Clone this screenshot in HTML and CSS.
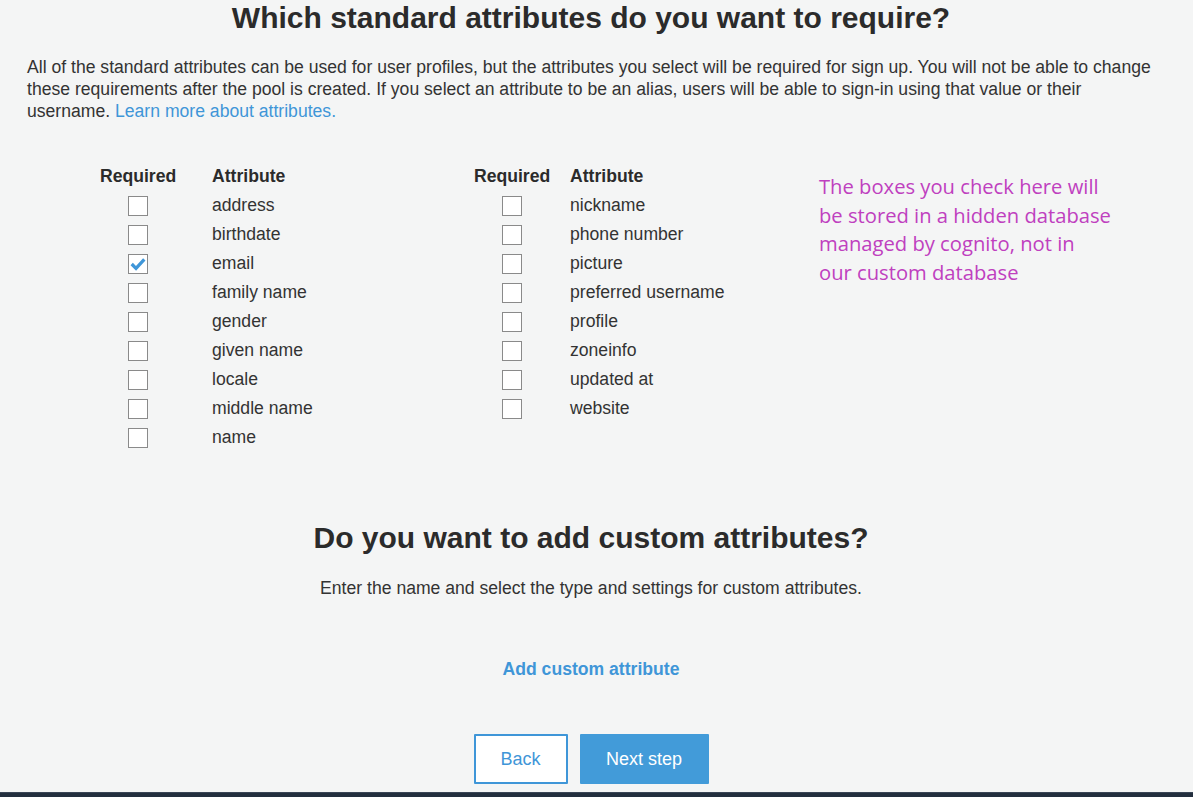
FILE: index.html
```html
<!DOCTYPE html>
<html>
<head>
<meta charset="utf-8">
<link rel="stylesheet" href="styles.css">
</head>
<body>
<div class="page">
  <h1 class="title">Which standard attributes do you want to require?</h1>
  <p class="intro">All of the standard attributes can be used for user profiles, but the attributes you select will be required for sign up. You will not be able to change these requirements after the pool is created. If you select an attribute to be an alias, users will be able to sign-in using that value or their username. <a class="link" href="#">Learn more about attributes.</a></p>

  <div class="attrs">
    <div class="table t1">
      <div class="row head"><span class="req">Required</span><span class="name">Attribute</span></div>
      <div class="row"><span class="req"><span class="box"></span></span><span class="name">address</span></div>
      <div class="row"><span class="req"><span class="box"></span></span><span class="name">birthdate</span></div>
      <div class="row"><span class="req"><span class="box checked"><svg viewBox="0 0 20 20" width="18" height="18"><path d="M3 10 L7.8 14.8 L17 4.8" fill="none" stroke="#3f96d8" stroke-width="3.6" stroke-linejoin="miter" stroke-linecap="butt"/></svg></span></span><span class="name">email</span></div>
      <div class="row"><span class="req"><span class="box"></span></span><span class="name">family name</span></div>
      <div class="row"><span class="req"><span class="box"></span></span><span class="name">gender</span></div>
      <div class="row"><span class="req"><span class="box"></span></span><span class="name">given name</span></div>
      <div class="row"><span class="req"><span class="box"></span></span><span class="name">locale</span></div>
      <div class="row"><span class="req"><span class="box"></span></span><span class="name">middle name</span></div>
      <div class="row"><span class="req"><span class="box"></span></span><span class="name">name</span></div>
    </div>
    <div class="table t2">
      <div class="row head"><span class="req">Required</span><span class="name">Attribute</span></div>
      <div class="row"><span class="req"><span class="box"></span></span><span class="name">nickname</span></div>
      <div class="row"><span class="req"><span class="box"></span></span><span class="name">phone number</span></div>
      <div class="row"><span class="req"><span class="box"></span></span><span class="name">picture</span></div>
      <div class="row"><span class="req"><span class="box"></span></span><span class="name">preferred username</span></div>
      <div class="row"><span class="req"><span class="box"></span></span><span class="name">profile</span></div>
      <div class="row"><span class="req"><span class="box"></span></span><span class="name">zoneinfo</span></div>
      <div class="row"><span class="req"><span class="box"></span></span><span class="name">updated at</span></div>
      <div class="row"><span class="req"><span class="box"></span></span><span class="name">website</span></div>
    </div>
    <div class="note">The boxes you check here will<br>be stored in a hidden database<br>managed by cognito, not in<br>our custom database</div>
  </div>

  <h2 class="title second">Do you want to add custom attributes?</h2>
  <p class="sub">Enter the name and select the type and settings for custom attributes.</p>
  <div class="add"><a class="link bold" href="#">Add custom attribute</a></div>
  <div class="buttons">
    <button class="btn back">Back</button>
    <button class="btn next">Next step</button>
  </div>
</div>
<div class="footer"></div>
</body>
</html>
```

FILE: styles.css
```css
html, body {
  margin: 0;
  padding: 0;
  background: #f4f5f5;
  height: 797px;
  overflow: hidden;
}
body {
  font-family: "Liberation Sans", Arial, sans-serif;
  color: #333333;
}
.page {
  padding: 0 38px 0 27px;
}
.title {
  margin: 0;
  font-size: 30px;
  line-height: 36px;
  font-weight: bold;
  text-align: center;
  color: #2b2b2b;
}
.intro {
  margin: 20px -14px 0 0;
  font-size: 17.6px;
  line-height: 22px;
}
.link {
  color: #3f96d8;
  text-decoration: none;
}
.bold { font-weight: bold; }
.attrs {
  display: flex;
  margin: 39px 0 0 73px;
}
.table { display: flex; flex-direction: column; }
.t1 { width: 374px; }
.t2 { width: 345px; }
.row {
  display: flex;
  align-items: center;
  height: 29px;
  font-size: 17.6px;
}
.head {
  font-weight: bold;
  color: #2b2b2b;
  height: 30px;
}
.req {
  display: flex;
  justify-content: center;
  width: 76px;
}
.t1 .req { margin-right: 36px; }
.t2 .req { margin-right: 20px; }
.head .req { justify-content: flex-start; }
.box {
  box-sizing: border-box;
  width: 20px;
  height: 20px;
  border: 1px solid #8a8a8a;
  background: #ffffff;
  display: flex;
  align-items: center;
  justify-content: center;
}
.note {
  font-family: "Open Sans", sans-serif;
  font-size: 20.2px;
  line-height: 28.7px;
  color: #bf40bf;
  white-space: nowrap;
  margin-top: 11px;
}
.second { margin-top: 68px; }
.sub {
  margin: 21px 0 0 0;
  text-align: center;
  font-size: 17.6px;
  line-height: 22px;
}
.add {
  margin-top: 59px;
  text-align: center;
  font-size: 17.6px;
  line-height: 22px;
}
.buttons {
  display: flex;
  justify-content: center;
  gap: 12px;
  margin-top: 54px;
}
.btn {
  box-sizing: border-box;
  height: 50px;
  font-family: "Liberation Sans", Arial, sans-serif;
  font-size: 18px;
  border-radius: 1px;
  cursor: pointer;
}
.back {
  width: 94px;
  background: #ffffff;
  border: 2px solid #3f96d8;
  color: #3f96d8;
}
.next {
  width: 129px;
  background: #429bd9;
  border: 0;
  color: #ffffff;
}
.footer {
  margin-top: 8px;
  height: 20px;
  background: #232f3e;
  border-top: 1px solid #3a4656;
}
```
